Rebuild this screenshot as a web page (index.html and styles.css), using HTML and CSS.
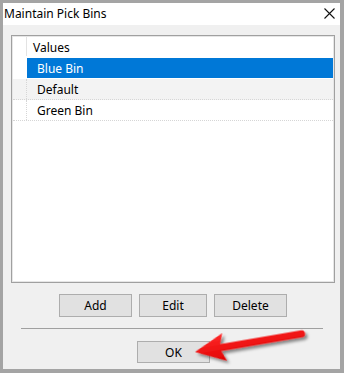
FILE: index.html
```html
<!DOCTYPE html>
<html>
<head>
  <title>Maintain Pick Bins</title>
  <link rel="stylesheet" href="styles.css">
</head>
<body>
  <div class="window">
    <div class="titlebar">
      <span class="title">Maintain Pick Bins</span>
      <svg class="close" width="11" height="11" viewBox="0 0 11 11">
        <path d="M0.5 0.5 L10.5 10.5 M10.5 0.5 L0.5 10.5" stroke="#111" stroke-width="1.1" fill="none"/>
      </svg>
    </div>

    <div class="content">
      <div class="grid">
        <div class="grid-header">
          <div class="indicator"></div>
          <div class="cell">Values</div>
        </div>
        <div class="row selected">
          <div class="indicator"></div>
          <div class="cell">Blue Bin</div>
        </div>
        <div class="row alt">
          <div class="indicator"></div>
          <div class="cell">Default</div>
        </div>
        <div class="row">
          <div class="indicator"></div>
          <div class="cell">Green Bin</div>
        </div>
      </div>

      <div class="buttons">
        <button class="btn">Add</button>
        <button class="btn btn-narrow">Edit</button>
        <button class="btn">Delete</button>
      </div>

      <div class="separator"></div>

      <div class="footer">
        <button class="btn btn-ok">OK</button>
      </div>
    </div>

    <!-- annotation arrow over the dialog -->
    <svg class="arrow" width="344" height="373" viewBox="0 0 344 373">
      <defs>
        <filter id="shadow" x="-20%" y="-50%" width="140%" height="200%">
          <feDropShadow dx="2" dy="3" stdDeviation="1.6" flood-color="#000" flood-opacity="0.45"/>
        </filter>
        <linearGradient id="red" x1="0" y1="0" x2="0" y2="1">
          <stop offset="0" stop-color="#ff2a2a"/>
          <stop offset="1" stop-color="#e00000"/>
        </linearGradient>
      </defs>
      <g transform="translate(195 352) rotate(-9.7)" filter="url(#shadow)">
        <path d="M0 0 L30 -14 L26 -3.6 L108 -3.6 A3.6 3.6 0 0 1 108 3.6 L26 3.6 L30 14 Z" fill="url(#red)"/>
      </g>
    </svg>
  </div>
</body>
</html>
```

FILE: styles.css
```css
body {
  margin: 0;
  padding: 0;
  font-family: "Noto Sans", "Liberation Sans", sans-serif;
  font-size: 12px;
  color: #000;
}

.window {
  position: relative;
  width: 344px;
  height: 373px;
  box-sizing: border-box;
  border: 3px solid #a4a4a4;
  border-right-width: 4px;
  border-bottom-width: 4px;
  display: flex;
  flex-direction: column;
  background-color: #f0f0f0;
}

.titlebar {
  height: 22px;
  background-color: #fff;
  display: flex;
  align-items: center;
  justify-content: space-between;
  padding: 0 5px 0 1px;
  flex-shrink: 0;
}

.title {
  font-size: 12px;
  line-height: 22px;
}

.close {
  display: block;
  margin-top: -1px;
}

.content {
  flex: 1;
  padding: 10px 5px 0 8px;
}

.grid {
  height: 248px;
  box-sizing: border-box;
  border: 1px solid #a0a0a0;
  box-shadow: inset 0 0 0 1px #e6e6e6;
  background-color: #fff;
  padding: 0 1px;
}

.grid-header {
  display: flex;
  height: 22px;
  align-items: stretch;
}

.grid-header .indicator {
  width: 13px;
  border-right: 1px solid #e3e3e3;
  margin: 1px 0 2px;
}

.grid-header .cell {
  padding-left: 6px;
  line-height: 23px;
}

.row {
  display: flex;
  height: 21px;
  box-sizing: border-box;
  border-bottom: 1px dotted #d6d6d6;
}

.row .indicator {
  width: 13px;
  border-right: 1px dotted #d6d6d6;
}

.row .cell {
  flex: 1;
  padding-left: 10px;
  line-height: 21px;
}

.row.selected {
  border-bottom-color: transparent;
}

.row.selected .indicator {
  border-right: 1px solid #fff;
}

.row.selected .cell {
  background-color: #0078d7;
  color: #fff;
}

.row.alt {
  background-color: #f3f3f3;
}

.buttons {
  display: flex;
  gap: 7px;
  margin-top: 11px;
  padding-left: 48px;
}

.btn {
  width: 73px;
  height: 23px;
  box-sizing: border-box;
  border: 1px solid #adadad;
  background-color: #e1e1e1;
  font-family: "Noto Sans", "Liberation Sans", sans-serif;
  font-size: 12px;
  color: #000;
  padding: 0;
}

.btn-narrow {
  width: 68px;
}

.separator {
  height: 1px;
  background-color: #a0a0a0;
  margin: 11px 12px 0 10px;
}

.footer {
  display: flex;
  margin-top: 12px;
  padding-left: 126px;
}

.btn-ok {
  height: 22px;
}

.arrow {
  position: absolute;
  left: -3px;
  top: -3px;
  pointer-events: none;
}
```
